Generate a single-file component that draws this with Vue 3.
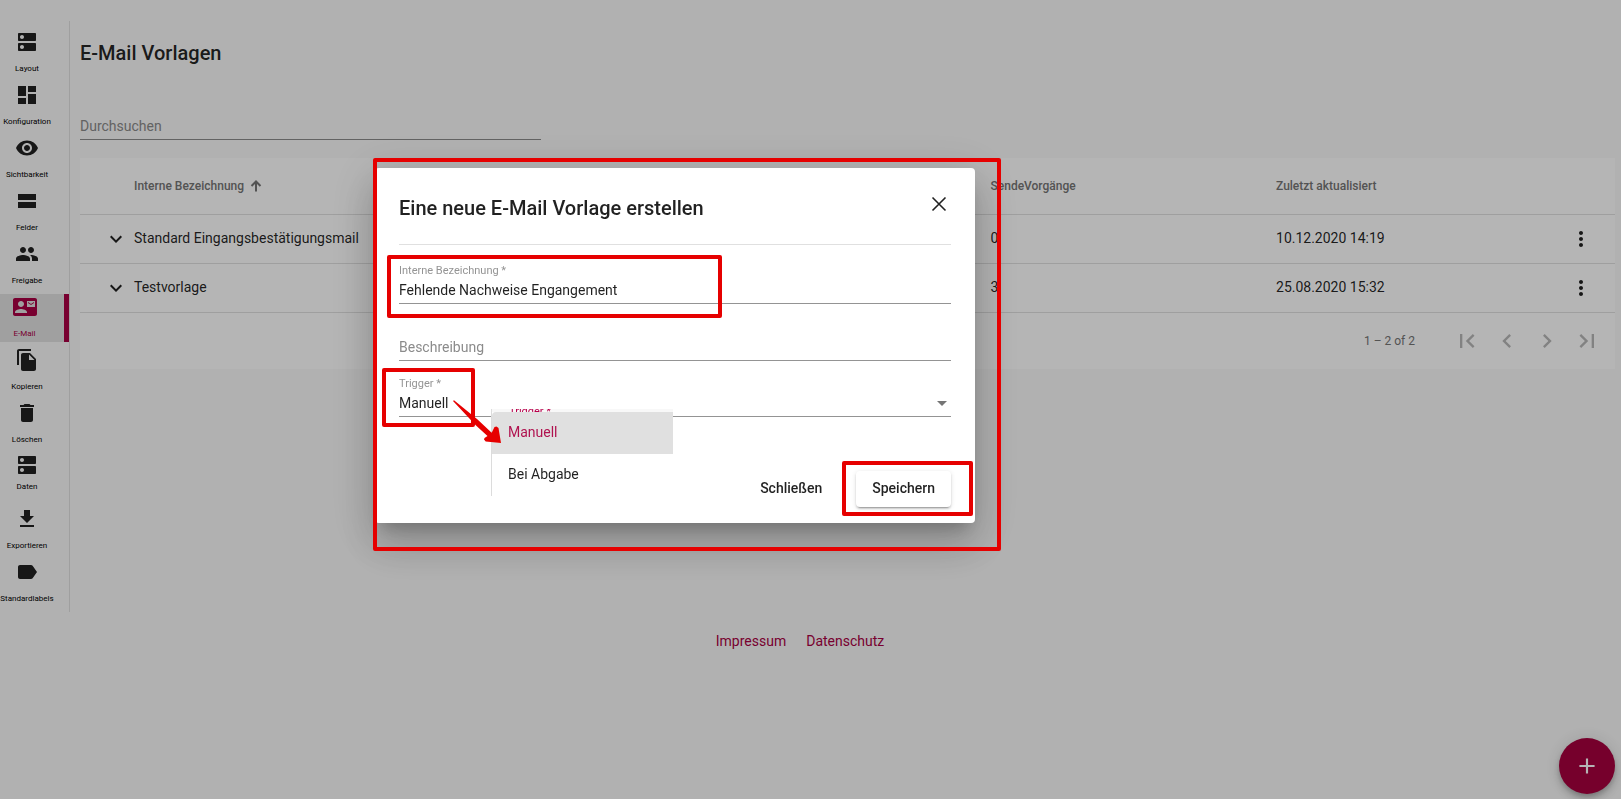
<script setup>
import { ref } from 'vue'

const dns = 'M20 13H4c-.55 0-1 .45-1 1v6c0 .55.45 1 1 1h16c.55 0 1-.45 1-1v-6c0-.55-.45-1-1-1zM7 19c-1.100 0-2-.9-2-2s.9-2 2-2 2 .9 2 2-.9 2-2 2zM20 3H4c-.55 0-1 .45-1 1v6c0 .55.45 1 1 1h16c.55 0 1-.45 1-1V4c0-.55-.45-1-1-1zM7 9c-1.100 0-2-.9-2-2s.9-2 2-2 2 .9 2 2-.9 2-2 2z'

const navItems = [
  { label: 'Layout', icon: dns },
  { label: 'Konfiguration', icon: 'M3 13h8V3H3v10zm0 8h8v-6H3v6zm10 0h8V11h-8v10zm0-18v6h8V3h-8z' },
  { label: 'Sichtbarkeit', icon: 'M12 4.500C7 4.500 2.730 7.610 1 12c1.730 4.390 6 7.500 11 7.500s9.270-3.110 11-7.500c-1.730-4.390-6-7.500-11-7.500zM12 17c-2.760 0-5-2.240-5-5s2.240-5 5-5 5 2.240 5 5-2.240 5-5 5zm0-8c-1.660 0-3 1.340-3 3s1.340 3 3 3 3-1.340 3-3-1.340-3-3-3z' },
  { label: 'Felder', icon: 'M3 19h18v-6H3v6zM3 5v6h18V5H3z' },
  { label: 'Freigabe', icon: 'M16 11c1.660 0 2.990-1.340 2.990-3S17.660 5 16 5s-3 1.340-3 3 1.340 3 3 3zm-8 0c1.660 0 2.990-1.340 2.990-3S9.660 5 8 5 5 6.340 5 8s1.340 3 3 3zm0 2c-2.330 0-7 1.170-7 3.500V19h14v-2.500c0-2.330-4.670-3.500-7-3.500zm8 0c-.29 0-.62.020-.97.050 1.160.84 1.970 1.970 1.970 3.450V19h6v-2.500c0-2.330-4.670-3.500-7-3.500z' },
  { label: 'E-Mail', active: true, icon: 'M21 8V7l-3 2-3-2v1l3 2 3-2zm1-5H2C.9 3 0 3.900 0 5v14c0 1.100.9 2 2 2h20c1.100 0 1.990-.9 1.990-2L24 5c0-1.100-.9-2-2-2zM8 6c1.660 0 3 1.340 3 3s-1.340 3-3 3-3-1.340-3-3 1.340-3 3-3zm6 12H2v-1c0-2 4-3.100 6-3.100s6 1.100 6 3.100v1zm8-6h-8V6h8v6z' },
  { label: 'Kopieren', icon: 'M16 1H4c-1.100 0-2 .9-2 2v14h2V3h12V1zm-1 4l6 6v10c0 1.100-.9 2-2 2H7.990C6.890 23 6 22.100 6 21l.01-14c0-1.100.89-2 1.990-2h7zm-1 7h5.500L14 6.500V12z' },
  { label: 'Löschen', icon: 'M6 19c0 1.100.9 2 2 2h8c1.100 0 2-.9 2-2V7H6v12zM19 4h-3.500l-1-1h-5l-1 1H5v2h14V4z' },
  { label: 'Daten', compact: true, icon: dns },
  { label: 'Exportieren', icon: 'M19 9h-4V3H9v6H5l7 7 7-7zM5 18v2h14v-2H5z' },
  { label: 'Standardlabels', icon: 'M17.630 5.840C17.270 5.330 16.670 5 16 5L5 5.010C3.900 5.010 3 5.900 3 7v10c0 1.100.9 1.990 2 1.990L16 19c.67 0 1.270-.33 1.630-.84L22 12l-4.370-6.160z' },
]

const rows = [
  { name: 'Standard Eingangsbestätigungsmail', sent: 0, updated: '10.12.2020 14:19' },
  { name: 'Testvorlage', sent: 3, updated: '25.08.2020 15:32' },
]

const pagerButtons = [
  { label: 'Erste Seite', icon: 'M18.410 16.590L13.820 12l4.590-4.590L17 6l-6 6 6 6zM6 6h2v12H6z' },
  { label: 'Vorherige Seite', icon: 'M15.410 7.410L14 6l-6 6 6 6 1.410-1.410L10.830 12z' },
  { label: 'Nächste Seite', icon: 'M10 6L8.590 7.410 13.170 12l-4.580 4.590L10 18l6-6z' },
  { label: 'Letzte Seite', icon: 'M5.590 7.410L10.180 12l-4.590 4.590L7 18l6-6-6-6zM16 6h2v12h-2z' },
]

const triggers = ['Manuell', 'Bei Abgabe']
const search = ref('')
const name = ref('Fehlende Nachweise Engangement')
const description = ref('')
const trigger = ref('Manuell')
</script>

<template>
  <div class="page">
    <div class="shell">
      <nav class="sidebar">
        <a
          v-for="item in navItems"
          :key="item.label"
          href="#"
          class="nav-item"
          :class="{ active: item.active, compact: item.compact }"
        >
          <svg viewBox="0 0 24 24"><path :d="item.icon" /></svg>
          <span>{{ item.label }}</span>
        </a>
      </nav>

      <main class="content">
        <h1>E-Mail Vorlagen</h1>
        <input v-model="search" class="search" type="text" placeholder="Durchsuchen" aria-label="Durchsuchen" />

        <section class="card">
          <table>
            <colgroup>
              <col class="col-toggle" />
              <col class="col-name" />
              <col class="col-sent" />
              <col />
              <col class="col-menu" />
            </colgroup>
            <thead>
              <tr>
                <th></th>
                <th>
                  <span class="sorted">
                    Interne Bezeichnung
                    <svg viewBox="0 0 12 12"><path d="M6 11.500V1.500M1.500 6L6 1.500 10.500 6" /></svg>
                  </span>
                </th>
                <th>SendeVorgänge</th>
                <th>Zuletzt aktualisiert</th>
                <th></th>
              </tr>
            </thead>
            <tbody>
              <tr v-for="row in rows" :key="row.name">
                <td class="toggle">
                  <button type="button" aria-label="Aufklappen">
                    <svg viewBox="0 0 24 24"><path d="M7.410 8.590L12 13.170l4.590-4.580L18 10l-6 6-6-6z" /></svg>
                  </button>
                </td>
                <td>{{ row.name }}</td>
                <td>{{ row.sent }}</td>
                <td>{{ row.updated }}</td>
                <td class="more">
                  <button type="button" aria-label="Aktionen">
                    <svg viewBox="0 0 24 24"><path d="M12 8c1.100 0 2-.9 2-2s-.9-2-2-2-2 .9-2 2 .9 2 2 2zm0 2c-1.100 0-2 .9-2 2s.9 2 2 2 2-.9 2-2-.9-2-2-2zm0 6c-1.100 0-2 .9-2 2s.9 2 2 2 2-.9 2-2-.9-2-2-2z" /></svg>
                  </button>
                </td>
              </tr>
            </tbody>
          </table>
          <div class="paginator">
            <span>1 – 2 of 2</span>
            <div class="pager">
              <button v-for="b in pagerButtons" :key="b.label" type="button" disabled :aria-label="b.label">
                <svg viewBox="0 0 24 24"><path :d="b.icon" /></svg>
              </button>
            </div>
          </div>
        </section>
      </main>
    </div>

    <footer>
      <a href="#">Impressum</a>
      <a href="#">Datenschutz</a>
    </footer>

    <button class="fab" type="button" aria-label="Neue Vorlage">
      <svg viewBox="0 0 24 24"><path d="M19 13h-6v6h-2v-6H5v-2h6V5h2v6h6v2z" /></svg>
    </button>

    <div class="backdrop">
      <div class="dialog" role="dialog" aria-labelledby="dialog-title">
        <header>
          <h2 id="dialog-title">Eine neue E-Mail Vorlage erstellen</h2>
          <button class="close" type="button" aria-label="Dialog schließen">
            <svg viewBox="0 0 24 24"><path d="M5.500 5.500l13 13M18.500 5.500l-13 13" /></svg>
          </button>
        </header>

        <form @submit.prevent>
          <div class="field">
            <label for="name">Interne Bezeichnung *</label>
            <input id="name" v-model="name" type="text" />
          </div>
          <div class="field unlabelled">
            <input v-model="description" type="text" placeholder="Beschreibung" aria-label="Beschreibung" />
          </div>
          <div class="field">
            <label for="trigger">Trigger *</label>
            <select id="trigger" v-model="trigger">
              <option v-for="t in triggers" :key="t">{{ t }}</option>
            </select>
            <svg class="caret" viewBox="0 0 10 5"><path d="M0 0h10L5 5z" /></svg>
            <div class="menu">
              <div class="menu-label"><span>Trigger *</span></div>
              <button
                v-for="t in triggers"
                :key="t"
                type="button"
                :class="{ selected: t === trigger }"
                @click="trigger = t"
              >{{ t }}</button>
            </div>
          </div>
          <div class="actions">
            <button type="button">Schließen</button>
            <button type="submit" class="raised">Speichern</button>
          </div>
        </form>

        <div class="mark mark-dialog"></div>
        <div class="mark mark-name"></div>
        <div class="mark mark-trigger"></div>
        <div class="mark mark-save"></div>
        <svg class="arrow" viewBox="0 0 50 46">
          <path d="M0 1L1 0.300L24 19L38.700 32.700L41.500 27L43.500 26.500L45.500 28L48 43L32.700 41.500L31 39.500L31.500 38L34.500 36L23 25.500Z" />
        </svg>
      </div>
    </div>
  </div>
</template>

<style>
body {
  margin: 0;
  background: #fafafa;
}
</style>

<style scoped>
.page,
.page * {
  box-sizing: border-box;
}
.page {
  min-height: 100vh;
  font-family: Roboto, "Liberation Sans", sans-serif;
  font-size: 14px;
  line-height: 20px;
  color: rgba(0, 0, 0, 0.87);
  padding: 21px 6px 0 0;
}
button,
input,
select {
  font: inherit;
  color: inherit;
  background: none;
  border: 0;
  padding: 0;
  margin: 0;
  outline: 0;
}
button {
  cursor: pointer;
}
svg {
  display: block;
  fill: currentColor;
}
.shell {
  display: flex;
}
.sidebar {
  flex: none;
  width: 70px;
  padding: 8px 0 5px;
  border-right: 1px solid #e0e0e0;
  display: flex;
  flex-direction: column;
  gap: 5px;
}
.nav-item {
  height: 48px;
  padding: 1px 15px 0 0;
  display: flex;
  flex-direction: column;
  align-items: center;
  gap: 10px;
  font-size: 8px;
  line-height: 10px;
  white-space: nowrap;
  color: #000;
  text-decoration: none;
}
.nav-item svg {
  width: 24px;
  height: 24px;
  flex: none;
  fill: #212121;
}
.nav-item.compact {
  padding-top: 0;
  gap: 5px;
}
.nav-item.active {
  background: #e2e2e2;
  border-right: 5px solid #aa0044;
  color: #aa0044;
}
.nav-item.active svg {
  fill: #aa0044;
}
.content {
  flex: 1;
  padding-left: 10px;
}
h1,
h2 {
  margin: 0;
  font-size: 20px;
  line-height: 32px;
  font-weight: 500;
}
h1 {
  padding-top: 16px;
}
.search {
  display: block;
  width: 30%;
  height: 27px;
  margin-top: 44px;
  border-bottom: 1px solid #8c8c8c;
}
input::placeholder {
  color: #8b8b8b;
  opacity: 1;
}
.card {
  margin-top: 18px;
  background: #fff;
}
table {
  width: 100%;
  table-layout: fixed;
  border-collapse: separate;
  border-spacing: 0;
}
.col-toggle {
  width: 54px;
}
.col-name {
  width: 55.8%;
}
.col-sent {
  width: 18.6%;
}
.col-menu {
  width: 68px;
}
th,
td {
  padding: 0;
  text-align: left;
  border-bottom: 1px solid #e0e0e0;
}
th {
  height: 57px;
  font-size: 12px;
  font-weight: 500;
  color: #757575;
}
td {
  height: 49px;
  padding-bottom: 2px;
}
td.toggle,
td.more {
  padding-bottom: 0;
}
td svg {
  width: 24px;
  height: 24px;
}
.sorted {
  display: flex;
  align-items: center;
  gap: 6px;
}
.sorted svg {
  width: 12px;
  height: 12px;
  fill: none;
  stroke: currentColor;
  stroke-width: 2;
}
.toggle button {
  display: block;
  margin-left: 24px;
}
.more button {
  display: block;
  margin-left: 22px;
}
.paginator {
  height: 56px;
  padding-right: 8px;
  display: flex;
  align-items: center;
  justify-content: flex-end;
  gap: 32px;
  font-size: 12px;
  color: #757575;
}
.pager {
  display: flex;
}
.pager button {
  width: 40px;
  height: 40px;
  display: grid;
  place-items: center;
  color: #b8b8b8;
}
.pager svg {
  width: 28px;
  height: 28px;
}
footer {
  display: flex;
  justify-content: center;
  gap: 20px;
  margin-top: 19px;
  padding-right: 15px;
}
footer a {
  color: #aa0044;
  text-decoration: none;
}
.fab {
  position: fixed;
  right: 6px;
  bottom: 5px;
  width: 56px;
  height: 56px;
  border-radius: 50%;
  display: grid;
  place-items: center;
  background: #a6003e;
  color: #fff;
  box-shadow: 0 3px 5px -1px rgba(0, 0, 0, 0.2), 0 6px 10px rgba(0, 0, 0, 0.14), 0 1px 18px rgba(0, 0, 0, 0.12);
}
.fab svg {
  width: 26px;
  height: 26px;
}
.backdrop {
  position: fixed;
  inset: 0;
  display: flex;
  align-items: center;
  justify-content: center;
  padding: 0 271px 108px 0;
  background: rgba(0, 0, 0, 0.29);
}
.dialog {
  position: relative;
  width: 600px;
  padding: 24px 24px 16px;
  border-radius: 4px;
  background: #fff;
  box-shadow: 0 11px 15px -7px rgba(0, 0, 0, 0.2), 0 24px 38px 3px rgba(0, 0, 0, 0.14), 0 9px 46px 8px rgba(0, 0, 0, 0.12);
}
.dialog header {
  display: flex;
  justify-content: space-between;
  align-items: flex-start;
  padding-bottom: 20px;
  border-bottom: 1px solid #e0e0e0;
}
.close svg {
  width: 24px;
  height: 24px;
  fill: none;
  stroke: currentColor;
  stroke-width: 1.6;
}
form {
  display: flex;
  flex-direction: column;
  gap: 14px;
  padding-top: 17px;
}
.field {
  position: relative;
}
.field.unlabelled {
  padding-top: 17px;
}
.field label {
  display: block;
  height: 16px;
  font-size: 11px;
  line-height: 18px;
  color: #949494;
}
.field input,
.field select {
  display: block;
  width: 100%;
  height: 26px;
  padding-bottom: 1px;
  border-bottom: 1px solid #949494;
  border-radius: 0;
  appearance: none;
}
.caret {
  position: absolute;
  right: 4px;
  top: 26px;
  width: 10px;
  height: 5px;
  fill: #757575;
}
.menu {
  position: absolute;
  left: 92px;
  top: 34px;
  width: 182px;
  background: #fff;
  border-left: 1px solid #dcdcdc;
}
.menu-label {
  height: 3px;
  padding-left: 17px;
  overflow: hidden;
  background: #f8f8f8;
  color: #b8004b;
  font-size: 11px;
  line-height: 6px;
}
.menu button {
  display: block;
  width: 100%;
  height: 42px;
  padding: 0 0 2px 16px;
  text-align: left;
}
.menu button.selected {
  background: #e0e0e0;
  border-top-left-radius: 4px;
  color: #b0124f;
}
.actions {
  display: flex;
  justify-content: flex-end;
  gap: 18px;
  margin-top: 40px;
}
.actions button {
  height: 36px;
  padding: 0 16px 2px;
  border-radius: 4px;
  font-weight: 500;
}
.actions .raised {
  box-shadow: 0 3px 1px -2px rgba(0, 0, 0, 0.2), 0 2px 2px rgba(0, 0, 0, 0.14), 0 1px 5px rgba(0, 0, 0, 0.12);
}
.mark {
  position: absolute;
  border: 4px solid #e60000;
  border-radius: 2px;
  pointer-events: none;
}
.mark-dialog {
  inset: -10px -26px -28px -2px;
}
.mark-name {
  left: 12px;
  top: 87px;
  width: 335px;
  height: 63px;
}
.mark-trigger {
  left: 7px;
  top: 200px;
  width: 93px;
  height: 59px;
}
.mark-save {
  right: 2px;
  bottom: 7px;
  width: 131px;
  height: 55px;
}
.arrow {
  position: absolute;
  left: 78px;
  top: 232px;
  width: 50px;
  height: 46px;
  fill: #e60000;
  pointer-events: none;
}
</style>
